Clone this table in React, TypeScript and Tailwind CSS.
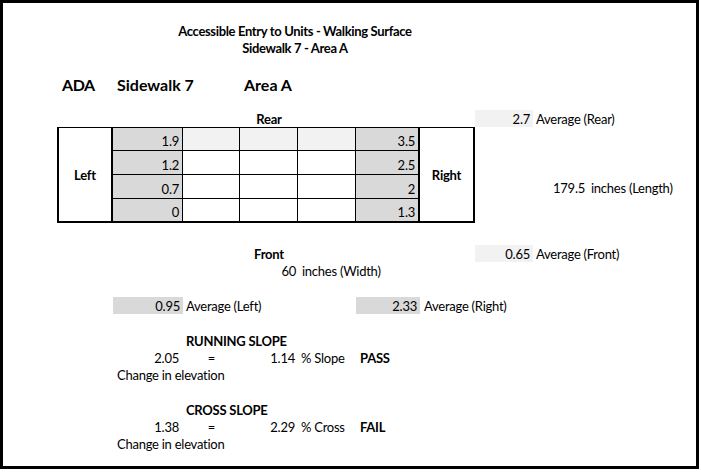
import React from "react";

const grey = "bg-[#d9d9d9]";
const light = "bg-[#f2f2f2]";

export default function App() {
  const rowsTable = [
    { l: "1.9", r: "3.5" },
    { l: "1.2", r: "2.5" },
    { l: "0.7", r: "2" },
    { l: "0", r: "1.3" },
  ];
  const rowStarts = ["row-start-8", "row-start-9", "row-start-10", "row-start-11"];
  return (
    <div
      className="w-[701px] h-[473px] bg-white text-black"
      style={{ fontFamily: "Lato, Carlito, 'Liberation Sans', sans-serif" }}
    >
      <div className="w-[699px] h-[469px] border-[3px] border-black">
        <div className="grid grid-cols-[54px_56px_70px_57px_58px_58px_64px_55px_58px_55px_1fr] grid-rows-[19px_17px_17px_20px_18px_16px_17px_24px_24px_24px_24px_22px_17px_17px_18px_17px_18px_17px_17px_17px_18px_17px_17px_17px] text-[13px] leading-[19px] tracking-[-0.25px]">
          {/* Title */}
          <div className="row-start-2 col-start-2 col-span-8 text-center font-bold tracking-[-0.35px]">
            Accessible Entry to Units - Walking Surface
          </div>
          <div className="row-start-3 col-start-2 col-span-8 text-center font-bold tracking-[-0.35px]">
            Sidewalk 7 - Area A
          </div>

          {/* ADA row */}
          <div className="row-start-5 col-start-2 pl-[5px] font-bold text-[16px] leading-[18px] tracking-[-0.4px] whitespace-nowrap">ADA</div>
          <div className="row-start-5 col-start-3 col-span-2 pl-[4px] font-bold text-[16px] leading-[18px] tracking-normal whitespace-nowrap">Sidewalk 7</div>
          <div className="row-start-5 col-start-5 col-span-2 pl-[4px] font-bold text-[16px] leading-[18px] tracking-normal whitespace-nowrap">Area A</div>

          {/* Rear row */}
          <div className="row-start-7 col-start-5 text-center font-bold">Rear</div>
          <div className={`row-start-7 col-start-9 ${light} text-right pr-[3px]`}>2.7</div>
          <div className="row-start-7 col-start-10 col-span-2 pl-[3px] whitespace-nowrap">Average (Rear)</div>

          {/* Table */}
          <div className="row-start-8 row-span-4 col-start-2 border-l-2 border-r-2 border-t border-b-2 border-black flex items-center justify-center font-bold pt-[2px]">
            Left
          </div>
          <div className="row-start-8 row-span-4 col-start-8 border-r-2 border-t border-b-2 border-black flex items-center justify-center font-bold pt-[2px]">
            Right
          </div>
          {rowsTable.map((r, i) => {
            const last = i === 3;
            const first = i === 0;
            const rs = rowStarts[i];
            const b = `${first ? "border-t" : ""} ${last ? "border-b-2" : "border-b"} border-black`;
            const mid = first ? light : "bg-white";
            return (
              <React.Fragment key={i}>
                <div className={`${rs} col-start-3 ${grey} ${b} border-r flex items-end justify-end pr-[3px] leading-[18px]`}>{r.l}</div>
                <div className={`${rs} col-start-4 ${mid} ${b} border-r`} />
                <div className={`${rs} col-start-5 ${mid} ${b} border-r`} />
                <div className={`${rs} col-start-6 ${mid} ${b} border-r`} />
                <div className={`${rs} col-start-7 ${grey} ${b} border-r-2 flex items-end justify-end pr-[3px] leading-[18px]`}>{r.r}</div>
              </React.Fragment>
            );
          })}
          <div className="row-start-10 col-start-10 text-right pr-[3px] self-center pt-[3px]">179.5</div>
          <div className="row-start-10 col-start-11 pl-[3px] whitespace-nowrap self-center pt-[3px]">inches (Length)</div>

          {/* Front */}
          <div className="row-start-13 col-start-5 text-center font-bold">Front</div>
          <div className={`row-start-13 col-start-9 ${light} text-right pr-[3px]`}>0.65</div>
          <div className="row-start-13 col-start-10 col-span-2 pl-[3px] whitespace-nowrap">Average (Front)</div>
          <div className="row-start-14 col-start-5 text-right pr-[2px]">60</div>
          <div className="row-start-14 col-start-6 col-span-2 pl-[4px] whitespace-nowrap">inches (Width)</div>

          {/* Averages */}
          <div className={`row-start-16 col-start-3 ${grey} text-right pr-[3px]`}>0.95</div>
          <div className="row-start-16 col-start-4 col-span-2 pl-[3px] whitespace-nowrap">Average (Left)</div>
          <div className={`row-start-16 col-start-7 ${grey} text-right pr-[3px]`}>2.33</div>
          <div className="row-start-16 col-start-8 col-span-2 pl-[4px] whitespace-nowrap">Average (Right)</div>

          {/* Running slope */}
          <div className="row-start-18 col-start-4 col-span-3 pl-[3px] font-bold whitespace-nowrap">RUNNING SLOPE</div>
          <div className="row-start-19 col-start-3 text-right pr-[4px]">2.05</div>
          <div className="row-start-19 col-start-4 text-center">=</div>
          <div className="row-start-19 col-start-5 text-right pr-[3px]">1.14</div>
          <div className="row-start-19 col-start-6 pl-[3px] whitespace-nowrap">% Slope</div>
          <div className="row-start-19 col-start-7 pl-[4px] font-bold">PASS</div>
          <div className="row-start-20 col-start-3 col-span-3 pl-[4px] whitespace-nowrap">Change in elevation</div>

          {/* Cross slope */}
          <div className="row-start-22 col-start-4 col-span-3 pl-[3px] font-bold whitespace-nowrap">CROSS SLOPE</div>
          <div className="row-start-23 col-start-3 text-right pr-[4px]">1.38</div>
          <div className="row-start-23 col-start-4 text-center">=</div>
          <div className="row-start-23 col-start-5 text-right pr-[3px]">2.29</div>
          <div className="row-start-23 col-start-6 pl-[3px] whitespace-nowrap">% Cross</div>
          <div className="row-start-23 col-start-7 pl-[4px] font-bold">FAIL</div>
          <div className="row-start-24 col-start-3 col-span-3 pl-[4px] whitespace-nowrap">Change in elevation</div>
        </div>
      </div>
    </div>
  );
}
